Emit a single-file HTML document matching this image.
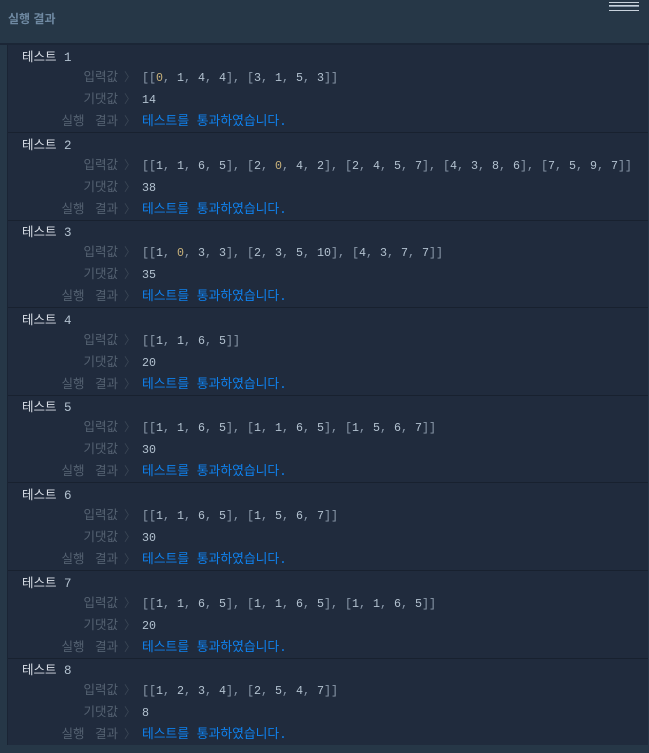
<!DOCTYPE html>
<html><head><meta charset="utf-8"><style>
body{margin:0;width:649px;height:753px;background:#263747;overflow:hidden;position:relative;font-family:"Liberation Mono","Noto Sans CJK KR",monospace;}
.hdr{position:absolute;left:0;top:0;width:649px;height:43px;background:#263747;border-bottom:2px solid #1b2636;}
.hdr .t{position:absolute;left:8px;top:10px;font:bold 12px "Liberation Sans","Noto Sans CJK KR",sans-serif;color:#6f89a2;}
.menu{position:absolute;left:609px;top:2px;width:30px;height:7px;border-top:1px solid #c8d2dc;border-bottom:1px solid #c8d2dc;}
.menu:after{content:"";position:absolute;left:0;right:0;top:2px;height:1px;background:#c8d2dc;border-bottom:1px solid #8899aa;}
.box{position:absolute;left:7px;top:45px;width:640px;height:700px;background:#202b3d;border-left:1px solid #1a2434;}
.blk{position:absolute;left:0;width:640px;height:87px;border-bottom:1px solid #18212f;}
.blk:last-child{border-bottom:none}
.ti{position:absolute;left:14px;top:1px;font-size:12.5px;color:#d8dee6;}
.r{position:absolute;left:0;width:640px;height:20px;font-size:11.67px;line-height:20px;white-space:pre;}
.l{position:absolute;right:530px;color:#556272;font-size:12.5px;word-spacing:3px;}
.a{position:absolute;left:116px;color:#3b4756;}
.v{position:absolute;left:134px;color:#8b9aab;}
.n{color:#b3c2d0}.z{color:#c9b27a}
.ok{position:absolute;left:134px;color:#0f82ef;font-size:12.8px;}
</style></head><body>
<div class="hdr"><div class="t">실행 결과</div><div class="menu"></div></div>
<div class="box">

<div class="blk" style="top:0">
<div class="ti">테스트 <span class="n">1</span></div>
<div class="r" style="top:23px"><span class="l">입력값</span><span class="a">〉</span><span class="v">[[<span class="z">0</span>, <span class="n">1</span>, <span class="n">4</span>, <span class="n">4</span>], [<span class="n">3</span>, <span class="n">1</span>, <span class="n">5</span>, <span class="n">3</span>]]</span></div>
<div class="r" style="top:45px"><span class="l">기댓값</span><span class="a">〉</span><span class="v"><span class="n">14</span></span></div>
<div class="r" style="top:67px"><span class="l">실행 결과</span><span class="a">〉</span><span class="ok">테스트를 통과하였습니다.</span></div>
</div>

<div class="blk" style="top:87.6px">
<div class="ti">테스트 <span class="n">2</span></div>
<div class="r" style="top:23px"><span class="l">입력값</span><span class="a">〉</span><span class="v">[[<span class="n">1</span>, <span class="n">1</span>, <span class="n">6</span>, <span class="n">5</span>], [<span class="n">2</span>, <span class="z">0</span>, <span class="n">4</span>, <span class="n">2</span>], [<span class="n">2</span>, <span class="n">4</span>, <span class="n">5</span>, <span class="n">7</span>], [<span class="n">4</span>, <span class="n">3</span>, <span class="n">8</span>, <span class="n">6</span>], [<span class="n">7</span>, <span class="n">5</span>, <span class="n">9</span>, <span class="n">7</span>]]</span></div>
<div class="r" style="top:45px"><span class="l">기댓값</span><span class="a">〉</span><span class="v"><span class="n">38</span></span></div>
<div class="r" style="top:67px"><span class="l">실행 결과</span><span class="a">〉</span><span class="ok">테스트를 통과하였습니다.</span></div>
</div>

<div class="blk" style="top:175.2px">
<div class="ti">테스트 <span class="n">3</span></div>
<div class="r" style="top:23px"><span class="l">입력값</span><span class="a">〉</span><span class="v">[[<span class="n">1</span>, <span class="z">0</span>, <span class="n">3</span>, <span class="n">3</span>], [<span class="n">2</span>, <span class="n">3</span>, <span class="n">5</span>, <span class="n">10</span>], [<span class="n">4</span>, <span class="n">3</span>, <span class="n">7</span>, <span class="n">7</span>]]</span></div>
<div class="r" style="top:45px"><span class="l">기댓값</span><span class="a">〉</span><span class="v"><span class="n">35</span></span></div>
<div class="r" style="top:67px"><span class="l">실행 결과</span><span class="a">〉</span><span class="ok">테스트를 통과하였습니다.</span></div>
</div>

<div class="blk" style="top:262.8px">
<div class="ti">테스트 <span class="n">4</span></div>
<div class="r" style="top:23px"><span class="l">입력값</span><span class="a">〉</span><span class="v">[[<span class="n">1</span>, <span class="n">1</span>, <span class="n">6</span>, <span class="n">5</span>]]</span></div>
<div class="r" style="top:45px"><span class="l">기댓값</span><span class="a">〉</span><span class="v"><span class="n">20</span></span></div>
<div class="r" style="top:67px"><span class="l">실행 결과</span><span class="a">〉</span><span class="ok">테스트를 통과하였습니다.</span></div>
</div>

<div class="blk" style="top:350.4px">
<div class="ti">테스트 <span class="n">5</span></div>
<div class="r" style="top:23px"><span class="l">입력값</span><span class="a">〉</span><span class="v">[[<span class="n">1</span>, <span class="n">1</span>, <span class="n">6</span>, <span class="n">5</span>], [<span class="n">1</span>, <span class="n">1</span>, <span class="n">6</span>, <span class="n">5</span>], [<span class="n">1</span>, <span class="n">5</span>, <span class="n">6</span>, <span class="n">7</span>]]</span></div>
<div class="r" style="top:45px"><span class="l">기댓값</span><span class="a">〉</span><span class="v"><span class="n">30</span></span></div>
<div class="r" style="top:67px"><span class="l">실행 결과</span><span class="a">〉</span><span class="ok">테스트를 통과하였습니다.</span></div>
</div>

<div class="blk" style="top:438px">
<div class="ti">테스트 <span class="n">6</span></div>
<div class="r" style="top:23px"><span class="l">입력값</span><span class="a">〉</span><span class="v">[[<span class="n">1</span>, <span class="n">1</span>, <span class="n">6</span>, <span class="n">5</span>], [<span class="n">1</span>, <span class="n">5</span>, <span class="n">6</span>, <span class="n">7</span>]]</span></div>
<div class="r" style="top:45px"><span class="l">기댓값</span><span class="a">〉</span><span class="v"><span class="n">30</span></span></div>
<div class="r" style="top:67px"><span class="l">실행 결과</span><span class="a">〉</span><span class="ok">테스트를 통과하였습니다.</span></div>
</div>

<div class="blk" style="top:525.6px">
<div class="ti">테스트 <span class="n">7</span></div>
<div class="r" style="top:23px"><span class="l">입력값</span><span class="a">〉</span><span class="v">[[<span class="n">1</span>, <span class="n">1</span>, <span class="n">6</span>, <span class="n">5</span>], [<span class="n">1</span>, <span class="n">1</span>, <span class="n">6</span>, <span class="n">5</span>], [<span class="n">1</span>, <span class="n">1</span>, <span class="n">6</span>, <span class="n">5</span>]]</span></div>
<div class="r" style="top:45px"><span class="l">기댓값</span><span class="a">〉</span><span class="v"><span class="n">20</span></span></div>
<div class="r" style="top:67px"><span class="l">실행 결과</span><span class="a">〉</span><span class="ok">테스트를 통과하였습니다.</span></div>
</div>

<div class="blk" style="top:613.2px">
<div class="ti">테스트 <span class="n">8</span></div>
<div class="r" style="top:23px"><span class="l">입력값</span><span class="a">〉</span><span class="v">[[<span class="n">1</span>, <span class="n">2</span>, <span class="n">3</span>, <span class="n">4</span>], [<span class="n">2</span>, <span class="n">5</span>, <span class="n">4</span>, <span class="n">7</span>]]</span></div>
<div class="r" style="top:45px"><span class="l">기댓값</span><span class="a">〉</span><span class="v"><span class="n">8</span></span></div>
<div class="r" style="top:67px"><span class="l">실행 결과</span><span class="a">〉</span><span class="ok">테스트를 통과하였습니다.</span></div>
</div>

</div>
</body></html>
